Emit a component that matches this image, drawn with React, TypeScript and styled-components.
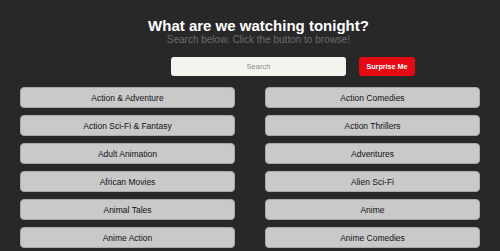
import styled, { createGlobalStyle } from 'styled-components'

const GlobalStyle = createGlobalStyle`
  html, body {
    margin: 0;
    padding: 0;
    background: #282828;
    font-family: "Liberation Sans", Arial, sans-serif;
  }
`

const Page = styled.main`
  min-height: 251px;
  background: #282828;
  padding-top: 17px;
  box-sizing: border-box;
`

const Header = styled.header`
  display: flex;
  flex-direction: column;
  align-items: center;
  padding-left: 17px;
`

const Title = styled.h1`
  margin: 0;
  font-size: 15px;
  line-height: 17px;
  font-weight: bold;
  color: #ffffff;
`

const Subtitle = styled.p`
  margin: 0;
  font-size: 10px;
  line-height: 11px;
  color: #6c6c6c;
`

const SearchRow = styled.div`
  display: flex;
  gap: 13px;
  margin: 12px 0 0 171px;
`

const SearchInput = styled.input`
  width: 175px;
  height: 19px;
  box-sizing: border-box;
  border: none;
  border-radius: 3px;
  background: #f4f4ef;
  font-family: inherit;
  font-size: 7.5px;
  text-align: center;
  color: #333;
  outline: none;

  &::placeholder {
    color: #8a8a8a;
  }
`

const SurpriseButton = styled.button`
  width: 56px;
  height: 19px;
  border: none;
  border-radius: 3px;
  background: #e50914;
  color: #fff;
  font-family: inherit;
  font-weight: bold;
  font-size: 7.2px;
  padding: 0;
  cursor: pointer;
`

const GenreGrid = styled.div`
  display: grid;
  grid-template-columns: 1fr 1fr;
  column-gap: 30px;
  row-gap: 7px;
  padding: 0 20px;
  margin-top: 11px;
`

const GenreButton = styled.button`
  height: 21px;
  box-sizing: border-box;
  border: 1px solid #a9a9a9;
  border-radius: 4px;
  background: #c9c9c9;
  color: #111;
  font-family: inherit;
  font-size: 8.5px;
  padding: 0;
  cursor: pointer;
`

const genres = [
  'Action & Adventure',
  'Action Comedies',
  'Action Sci-Fi & Fantasy',
  'Action Thrillers',
  'Adult Animation',
  'Adventures',
  'African Movies',
  'Alien Sci-Fi',
  'Animal Tales',
  'Anime',
  'Anime Action',
  'Anime Comedies',
]

const App = () => {
  return (
    <>
      <GlobalStyle />
      <Page>
        <Header>
          <Title>What are we watching tonight?</Title>
          <Subtitle>Search below. Click the button to browse!</Subtitle>
        </Header>
        <SearchRow>
          <SearchInput placeholder="Search" />
          <SurpriseButton>Surprise Me</SurpriseButton>
        </SearchRow>
        <GenreGrid>
          {genres.map((g) => (
            <GenreButton key={g}>{g}</GenreButton>
          ))}
        </GenreGrid>
      </Page>
    </>
  )
}

export default App
